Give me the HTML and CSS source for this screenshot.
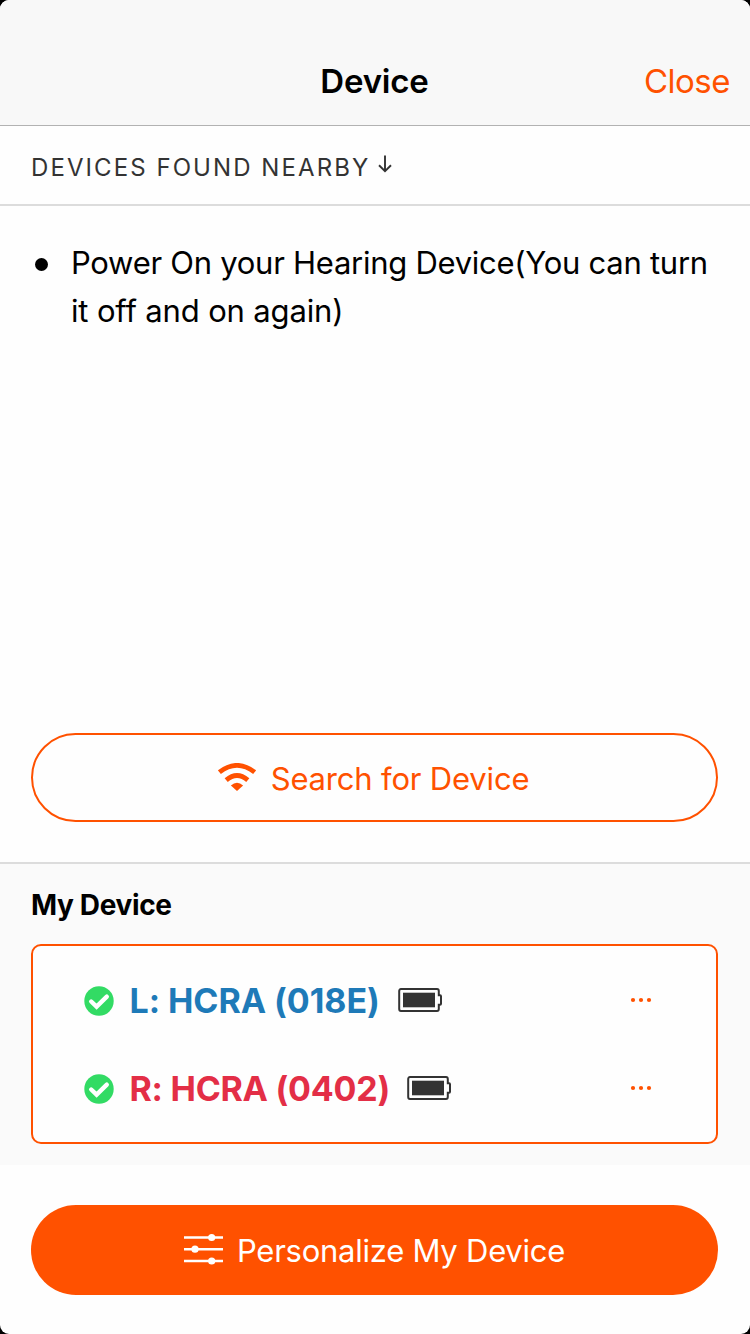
FILE: index.html
```html
<!DOCTYPE html>
<html lang="en">
<head>
<meta charset="utf-8">
<title>Device</title>
<link rel="stylesheet" href="styles.css">
</head>
<body>
<div class="screen">
  <header class="nav">
    <span></span>
    <h1 class="nav-title">Device</h1>
    <a class="nav-close">Close</a>
  </header>
  <div class="section-head">
    <span class="section-label">DEVICES FOUND NEARBY</span>
    <svg class="arrow" width="14" height="18" viewBox="0 0 14 18" fill="none" stroke="#333" stroke-width="1.9"><path d="M7 .5V16M1 10.3L7 16.2L13 10.3"/></svg>
  </div>
  <main class="nearby">
    <ul class="tips"><li class="tip"><span class="bullet"></span><span class="tip-text">Power On your Hearing Device(You can turn<br><span class="tip-second">it off and on again)</span></span></li></ul>
    <button class="btn btn-outline">
      <svg class="wifi" width="38" height="28" viewBox="0 0 38 28" fill="none" stroke="#ff5100" stroke-width="4.8"><path d="M1.4 9.2Q19 -4.4 36.6 9.2"/><path d="M8.2 17.2Q19 8 29.8 17.2"/><path d="M12.9 22.6Q19 17 25.1 22.6L19 28Z" fill="#ff5100" stroke="none"/></svg>
      <span class="search-label">Search for Device</span>
    </button>
  </main>
  <section class="mine">
    <h2 class="mine-title">My Device</h2>
    <div class="card">
      <div class="row">
        <svg class="check" width="30" height="30" viewBox="0 0 30 30"><circle cx="15" cy="15" r="14.7" fill="#32db64"/><path d="M7.2 15.5L12.6 20.6L22.8 10.7" fill="none" stroke="#fff" stroke-width="4.4" stroke-linecap="round"/></svg>
        <span class="name left">L: HCRA (018E)</span>
        <svg class="battery" width="44" height="24" viewBox="0 0 44 24"><path d="M3 1.1H39Q40.8 1.1 40.8 3V7.3H42.1Q43 7.3 43 8.3V15.7Q43 16.7 42.1 16.7H40.8V21Q40.8 22.9 39 22.9H3Q1.2 22.9 1.2 21V3Q1.2 1.1 3 1.1Z" fill="none" stroke="#333" stroke-width="2"/><path d="M5 4.7H37V19.3H5Z" fill="#333"/></svg>
        <svg class="more" width="22" height="6" viewBox="0 0 22 6" fill="#ff5100"><circle cx="3" cy="3" r="2.1"/><circle cx="11" cy="3" r="2.1"/><circle cx="19" cy="3" r="2.1"/></svg>
      </div>
      <div class="row">
        <svg class="check" width="30" height="30" viewBox="0 0 30 30"><circle cx="15" cy="15" r="14.7" fill="#32db64"/><path d="M7.2 15.5L12.6 20.6L22.8 10.7" fill="none" stroke="#fff" stroke-width="4.4" stroke-linecap="round"/></svg>
        <span class="name right">R: HCRA (0402)</span>
        <svg class="battery" width="44" height="24" viewBox="0 0 44 24"><path d="M3 1.1H39Q40.8 1.1 40.8 3V7.3H42.1Q43 7.3 43 8.3V15.7Q43 16.7 42.1 16.7H40.8V21Q40.8 22.9 39 22.9H3Q1.2 22.9 1.2 21V3Q1.2 1.1 3 1.1Z" fill="none" stroke="#333" stroke-width="2"/><path d="M5 4.7H37V19.3H5Z" fill="#333"/></svg>
        <svg class="more" width="22" height="6" viewBox="0 0 22 6" fill="#ff5100"><circle cx="3" cy="3" r="2.1"/><circle cx="11" cy="3" r="2.1"/><circle cx="19" cy="3" r="2.1"/></svg>
      </div>
    </div>
  </section>
  <footer class="footer">
    <button class="btn btn-solid">
      <svg class="sliders" width="39" height="32" viewBox="0 0 39 32" fill="#fff" stroke="#fff" stroke-width="2.6"><path d="M0 4.5H39M0 16.2H39M0 28H39"/><g stroke="none"><circle cx="27.7" cy="4.5" r="3.6"/><circle cx="11" cy="16.2" r="3.6"/><circle cx="27.7" cy="28" r="3.6"/></g></svg>
      <span class="personal-label">Personalize My Device</span>
    </button>
  </footer>
</div>
</body>
</html>
```
FILE: styles.css
```css
* { box-sizing: border-box; }
body { margin: 0; background: #000; font-family: Inter, "Liberation Sans", sans-serif; color: #000; }
h1, h2, ul { margin: 0; padding: 0; }
svg { display: block; flex: none; }
.screen { width: 750px; height: 1334px; display: flex; flex-direction: column; background: #fefefe; border-radius: 9px; overflow: hidden; white-space: nowrap; }
.nav { height: 126px; padding: 36px 20px 0; display: grid; grid-template-columns: 1fr auto 1fr; align-items: center; background: #f8f8f8; border-bottom: 1px solid #b2b2b2; }
.nav-title { font-size: 33px; font-weight: 600; letter-spacing: -0.2px; padding-right: 1px; }
.nav-close { justify-self: end; font-size: 33px; letter-spacing: -0.5px; color: #ff5100; }
.section-head { height: 80px; padding: 0 31px; display: flex; align-items: center; gap: 8px; border-bottom: 2px solid #dcdcdc; color: #333; }
.section-label { font-size: 24px; letter-spacing: 2.07px; padding-top: 5px; }
.arrow { margin-bottom: 2px; }
.nearby { height: 656px; padding: 33px 31px 40px; display: flex; flex-direction: column; justify-content: space-between; }
.tips { list-style: none; }
.tip { display: flex; padding-left: 4px; gap: 23px; font-size: 31px; line-height: 48px; }
.tip-text { letter-spacing: -0.27px; }
.tip-second { letter-spacing: -0.15px; }
.bullet { width: 13px; height: 13px; margin-top: 19px; border-radius: 50%; background: #000; }
.btn { width: 687px; height: 90px; padding: 0; display: flex; align-items: center; justify-content: center; border-radius: 45px; font: 400 31px Inter, sans-serif; white-space: nowrap; }
.btn-outline { height: 89px; padding-right: 2px; border: 2px solid #ff5100; background: transparent; color: #ff5100; gap: 15px; }
.wifi { margin-bottom: 2px; }
.search-label { letter-spacing: -0.18px; padding-top: 2px; }
.btn-solid { border: 0; background: #ff5100; color: #fff; gap: 14px; }
.sliders { margin-bottom: 2px; }
.personal-label { letter-spacing: -0.25px; }
.mine { height: 303px; padding: 23px 31px 0; background: #fafafa; border-top: 2px solid #dcdcdc; }
.mine-title { font-size: 28px; line-height: 34px; font-weight: 700; letter-spacing: -0.35px; margin-bottom: 23px; padding-top: 1px; height: 34px; }
.card { width: 687px; height: 200px; padding: 10px 64px 10px 51px; border: 2px solid #ff5100; border-radius: 10px; background: #fefefe; }
.row { height: 88px; display: flex; align-items: center; }
.check { margin-top: 1px; }
.name { width: 253px; margin-left: 15.5px; font-size: 34px; font-weight: 700; }
.left { letter-spacing: -0.05px; color: #1e7ab8; }
.right { width: 262px; letter-spacing: -0.25px; color: #e32e46; }
.battery { margin-left: 15px; }
.more { margin-left: auto; }
.footer { padding: 40px 31px 0; }
```
